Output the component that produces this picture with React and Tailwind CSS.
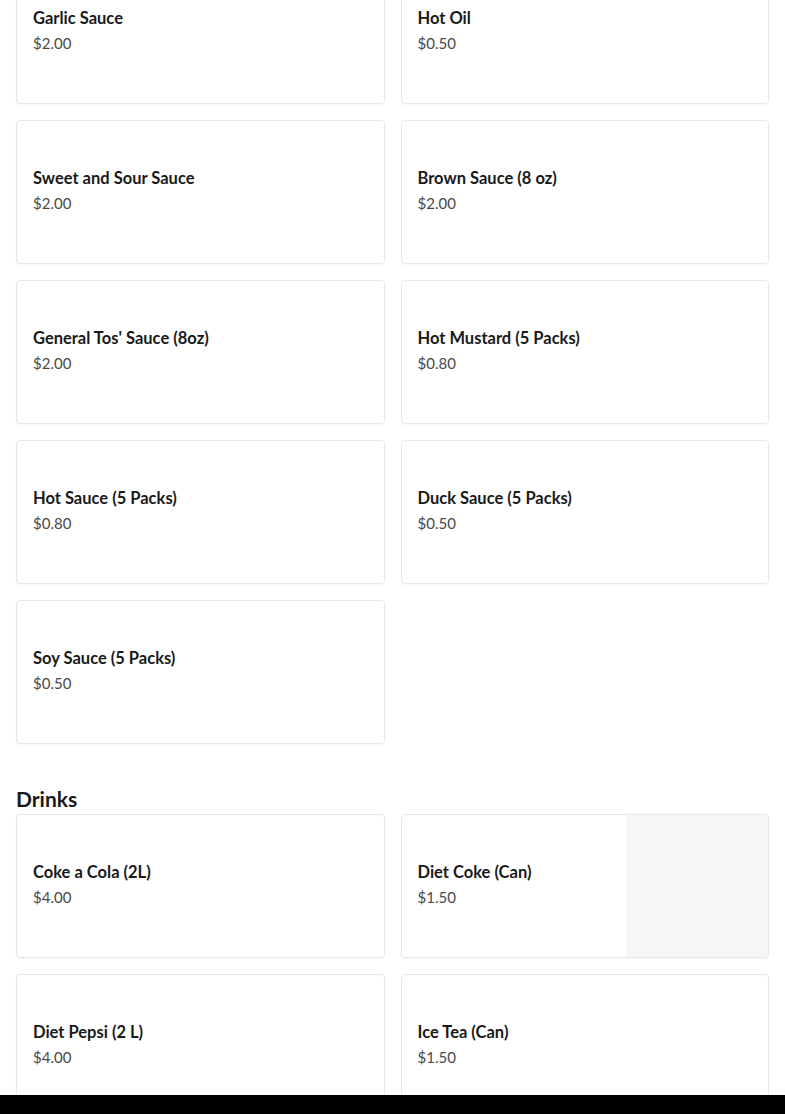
const sauces = [
  { name: 'Garlic Sauce', price: '$2.00' },
  { name: 'Hot Oil', price: '$0.50' },
  { name: 'Sweet and Sour Sauce', price: '$2.00' },
  { name: 'Brown Sauce (8 oz)', price: '$2.00' },
  { name: "General Tos' Sauce (8oz)", price: '$2.00' },
  { name: 'Hot Mustard (5 Packs)', price: '$0.80' },
  { name: 'Hot Sauce (5 Packs)', price: '$0.80' },
  { name: 'Duck Sauce (5 Packs)', price: '$0.50' },
  { name: 'Soy Sauce (5 Packs)', price: '$0.50' },
]

const drinks = [
  { name: 'Coke a Cola (2L)', price: '$4.00' },
  { name: 'Diet Coke (Can)', price: '$1.50', image: true },
  { name: 'Diet Pepsi (2 L)', price: '$4.00' },
  { name: 'Ice Tea (Can)', price: '$1.50' },
]

function ItemCard({ item }) {
  return (
    <div className="flex h-[144px] overflow-hidden rounded-[4px] border border-[#e8e8e8] bg-white shadow-[0_1px_2px_rgba(0,0,0,0.04)]">
      <div className="flex-1 px-4 pt-[45px]">
        <div className="text-[16.5px] leading-6 font-bold text-[#191919]">{item.name}</div>
        <div className="mt-[3px] text-[15px] leading-5 text-[#494949]">{item.price}</div>
      </div>
      {item.image && <div className="w-[142px] bg-[#f6f6f6]" />}
    </div>
  )
}

export default function App() {
  return (
    <div className="min-h-screen bg-white font-['Lato','Liberation_Sans',sans-serif]">
      <div className="-mt-10 px-4 pb-10">
        <div className="grid grid-cols-2 gap-4">
          {sauces.map((s) => (
            <ItemCard key={s.name} item={s} />
          ))}
        </div>

        {/* Drinks */}
        <h2 className="mt-[43px] mb-[3px] text-[21px] leading-6 font-bold text-[#191919]">Drinks</h2>
        <div className="grid grid-cols-2 gap-4">
          {drinks.map((d) => (
            <ItemCard key={d.name} item={d} />
          ))}
        </div>
      </div>
      <div className="fixed inset-x-0 bottom-0 h-[19px] bg-black" />
    </div>
  )
}
